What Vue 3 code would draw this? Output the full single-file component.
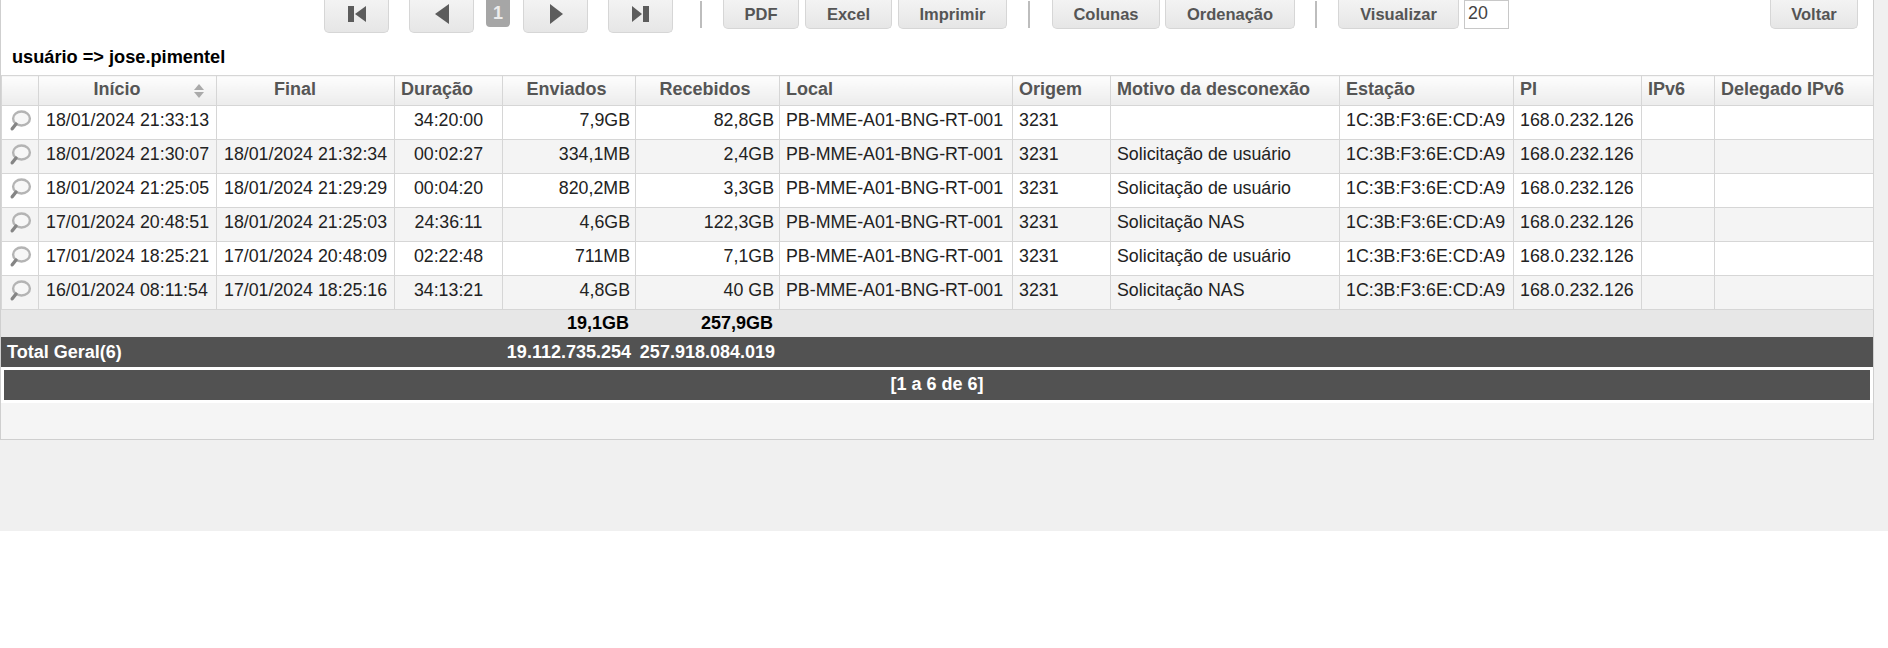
<script setup>
const columns = [
  { label: '', width: 37 },
  { label: 'Início', width: 178, cls: 'center wide', sort: true },
  { label: 'Final', width: 178, cls: 'center wide' },
  { label: 'Duração', width: 108 },
  { label: 'Enviados', width: 133, cls: 'center' },
  { label: 'Recebidos', width: 144, cls: 'center' },
  { label: 'Local', width: 233 },
  { label: 'Origem', width: 98 },
  { label: 'Motivo da desconexão', width: 229 },
  { label: 'Estação', width: 174 },
  { label: 'PI', width: 128 },
  { label: 'IPv6', width: 73 },
  { label: 'Delegado IPv6', width: 159 }
]

const rows = [
  ['18/01/2024 21:33:13', '', '34:20:00', '7,9GB', '82,8GB', ''],
  ['18/01/2024 21:30:07', '18/01/2024 21:32:34', '00:02:27', '334,1MB', '2,4GB', 'Solicitação de usuário'],
  ['18/01/2024 21:25:05', '18/01/2024 21:29:29', '00:04:20', '820,2MB', '3,3GB', 'Solicitação de usuário'],
  ['17/01/2024 20:48:51', '18/01/2024 21:25:03', '24:36:11', '4,6GB', '122,3GB', 'Solicitação NAS'],
  ['17/01/2024 18:25:21', '17/01/2024 20:48:09', '02:22:48', '711MB', '7,1GB', 'Solicitação de usuário'],
  ['16/01/2024 08:11:54', '17/01/2024 18:25:16', '34:13:21', '4,8GB', '40 GB', 'Solicitação NAS']
]
</script>

<template>
  <div class="page">
    <div class="panel">
      <div class="toolbar">
        <button class="nav first"><svg width="18" height="16" viewBox="0 0 18 16"><path d="M0 0h6v16H0zM18 0v16L7 8z" /></svg></button>
        <button class="nav prev"><svg width="14" height="20" viewBox="0 0 14 20"><path d="M14 0v20L0 10z" /></svg></button>
        <span class="current">1</span>
        <button class="nav next"><svg width="13" height="20" viewBox="0 0 13 20"><path d="M0 0v20l13-10z" /></svg></button>
        <button class="nav last"><svg width="17" height="16" viewBox="0 0 17 16"><path d="M0 0v16l10-8zM11 0h6v16h-6z" /></svg></button>
        <i class="sep s1"></i>
        <button class="btn w76">PDF</button>
        <button class="btn w87">Excel</button>
        <button class="btn w109">Imprimir</button>
        <i class="sep s2"></i>
        <button class="btn w108">Colunas</button>
        <button class="btn w130">Ordenação</button>
        <i class="sep s3"></i>
        <button class="btn w121">Visualizar</button>
        <input class="qty" value="20" />
        <button class="btn w88 back">Voltar</button>
      </div>
      <div class="title">usuário =&gt; jose.pimentel</div>
      <table class="grid">
        <colgroup>
          <col v-for="c in columns" :key="c.label" :style="{ width: c.width + 'px' }" />
        </colgroup>
        <thead>
          <tr>
            <th v-for="c in columns" :key="c.label" :class="c.cls">
              {{ c.label }}
              <span v-if="c.sort" class="sort"></span>
            </th>
          </tr>
        </thead>
        <tbody>
          <tr v-for="(r, i) in rows" :key="i">
            <td class="lens">
              <svg width="24" height="24" viewBox="0 0 24 24">
                <ellipse cx="12.5" cy="9.5" rx="8.4" ry="7" fill="#f7f7f7" stroke="#b4b4b4" stroke-width="2.4" />
                <path d="M7 15 3.2 19.8" stroke="#858585" stroke-width="3.4" stroke-linecap="round" />
              </svg>
            </td>
            <td class="pad">{{ r[0] }}</td>
            <td class="pad">{{ r[1] }}</td>
            <td class="mid">{{ r[2] }}</td>
            <td class="num">{{ r[3] }}</td>
            <td class="num">{{ r[4] }}</td>
            <td>PB-MME-A01-BNG-RT-001</td>
            <td>3231</td>
            <td>{{ r[5] }}</td>
            <td>1C:3B:F3:6E:CD:A9</td>
            <td>168.0.232.126</td>
            <td></td>
            <td></td>
          </tr>
        </tbody>
      </table>
      <div class="subtotal">
        <span class="sent">19,1GB</span>
        <span class="received">257,9GB</span>
      </div>
      <div class="total">
        <span class="total-label">Total Geral(6)</span>
        <span class="sent">19.112.735.254</span>
        <span class="received">257.918.084.019</span>
      </div>
      <div class="pager-wrap">
        <div class="pager">[1 a 6 de 6]</div>
      </div>
      <div class="panel-foot"></div>
    </div>
  </div>
</template>

<style>
html, body {
  margin: 0;
  background: #fff;
}
</style>

<style scoped>
* {
  box-sizing: border-box;
}
.page {
  height: 531px;
  background: #f0f0f0;
  font-family: "Liberation Sans", Arial, sans-serif;
  font-size: 17.8px;
  color: #222;
}
.panel {
  width: 1874px;
  height: 440px;
  border: 1px solid #cfcfcf;
  border-top: 0;
  background: #fff;
}
.toolbar {
  display: flex;
  align-items: flex-start;
  height: 36px;
  padding-left: 323px;
}
.nav,
.btn {
  padding: 0;
  border: 1px solid #d6d6d6;
  border-top: 0;
  border-radius: 0 0 5px 5px;
  background: linear-gradient(#f3f3f3, #e6e6e6);
  font: bold 16.5px "Liberation Sans", Arial, sans-serif;
  color: #555;
  display: flex;
  align-items: center;
  justify-content: center;
}
.nav {
  width: 65px;
  height: 33px;
  padding-bottom: 5px;
  margin-right: 20px;
}
.nav svg {
  fill: #5c5c5c;
}
.prev {
  margin-right: 12px;
}
.next svg {
  margin-left: 2px;
}
.last {
  margin-right: 0;
}
.current {
  width: 24px;
  height: 27px;
  margin-right: 13px;
  background: #a6a6a6;
  color: #ececec;
  border-radius: 0 0 4px 4px;
  text-align: center;
  font-size: 18px;
  font-weight: bold;
  line-height: 27px;
}
.sep {
  width: 2px;
  height: 27px;
  background: #bdbdbd;
}
.s1 { margin: 1px 21px 0 27px; }
.s2 { margin: 1px 22px 0 15px; }
.s3 { margin: 1px 21px 0 14px; }
.btn {
  height: 29px;
  margin-right: 6px;
}
.w76 { width: 76px; }
.w87 { width: 87px; }
.w108 { width: 108px; margin-right: 5px; }
.w109 { width: 109px; }
.w130 { width: 130px; }
.w121 { width: 121px; margin-right: 5px; }
.w88 { width: 88px; }
.qty {
  width: 45px;
  height: 29px;
  border: 1px solid #c8c8c8;
  padding: 0 0 2px 3px;
  font: 17.8px "Liberation Sans", Arial, sans-serif;
  color: #444;
  background: #fff;
}
.back {
  margin-left: auto;
  margin-right: 15px;
}
.title {
  height: 39px;
  padding: 11px 0 0 11px;
  font-weight: bold;
  font-size: 18.2px;
  line-height: 20px;
  color: #000;
}
.grid {
  width: 1872px;
  table-layout: fixed;
  border-collapse: collapse;
}
th,
td {
  height: 34px;
  padding: 0 6px;
  border: 1px solid #d6d6d6;
  white-space: nowrap;
  overflow: hidden;
  text-align: left;
}
th {
  height: 30px;
  padding-bottom: 2px;
  position: relative;
  background: linear-gradient(#fdfdfd, #ececec);
  color: #555;
  font-size: 18px;
  font-weight: bold;
}
th.center {
  padding-right: 11px;
  text-align: center;
}
th.wide {
  padding-right: 27px;
}
td {
  vertical-align: top;
  padding-top: 4px;
  line-height: 20px;
}
tbody tr:nth-child(even) td {
  background: #f4f4f4;
}
td.lens {
  padding: 3px 0 0 7px;
}
.lens svg {
  display: block;
}
td.pad {
  padding-left: 7px;
}
td.mid {
  text-align: center;
}
td.num {
  padding-right: 5px;
  text-align: right;
}
.sort {
  position: absolute;
  right: 12px;
  top: 8px;
  width: 10px;
  height: 14px;
}
.sort::before,
.sort::after {
  content: "";
  position: absolute;
  left: 0;
  border-left: 5px solid transparent;
  border-right: 5px solid transparent;
}
.sort::before {
  top: 0;
  border-bottom: 6px solid #aaa;
}
.sort::after {
  bottom: 0;
  border-top: 6px solid #aaa;
}
.subtotal,
.total {
  display: grid;
  grid-template-columns: 501px 127px 144px 1fr;
  align-items: center;
  font-size: 18px;
  font-weight: bold;
}
.subtotal {
  height: 27px;
  background: #e7e7e7;
  color: #000;
}
.subtotal .sent { grid-column: 2; text-align: right; }
.subtotal .received { grid-column: 3; text-align: right; }
.total {
  height: 30px;
  background: #525252;
  color: #fff;
}
.total-label {
  padding-left: 6px;
}
.total .sent,
.total .received {
  margin-right: -2px;
  justify-self: end;
}
.total .sent {
  grid-column: 2;
}
.total .received {
  grid-column: 3;
}
.pager-wrap {
  padding: 3px;
}
.pager {
  height: 30px;
  background: #525252;
  color: #fff;
  font-size: 18px;
  font-weight: bold;
  text-align: center;
  line-height: 29px;
}
.panel-foot {
  height: 36px;
  background: #f5f5f5;
}
</style>
